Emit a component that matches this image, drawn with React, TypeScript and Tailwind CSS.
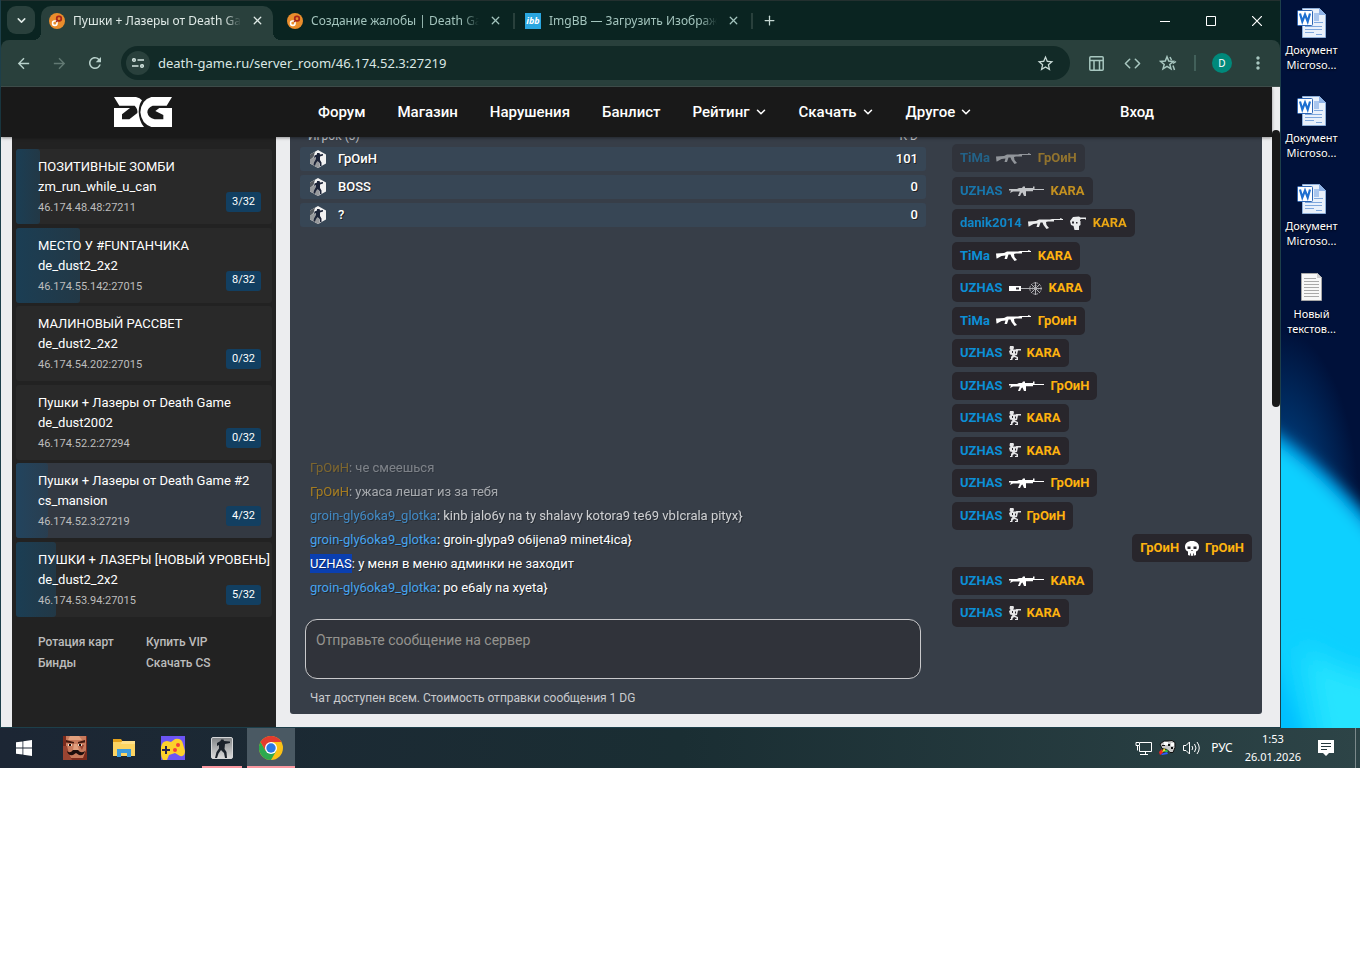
import type { ReactNode } from "react";
import { ChevronDown, Code, Plus, X } from "lucide-react";
import {
  MdArrowBack,
  MdArrowForward,
  MdMoreVert,
  MdRefresh,
  MdStarBorder,
} from "react-icons/md";

const servers = [
  { name: "ПОЗИТИВНЫЕ ЗОМБИ", map: "zm_run_while_u_can", ip: "46.174.48.48:27211", online: 3 },
  { name: "МЕСТО У #FUNТАНЧИКА", map: "de_dust2_2x2", ip: "46.174.55.142:27015", online: 8 },
  { name: "МАЛИНОВЫЙ РАССВЕТ", map: "de_dust2_2x2", ip: "46.174.54.202:27015", online: 0 },
  { name: "Пушки + Лазеры от Death Game", map: "de_dust2002", ip: "46.174.52.2:27294", online: 0 },
  { name: "Пушки + Лазеры от Death Game #2", map: "cs_mansion", ip: "46.174.52.3:27219", online: 4, active: true },
  { name: "ПУШКИ + ЛАЗЕРЫ [НОВЫЙ УРОВЕНЬ]", map: "de_dust2_2x2", ip: "46.174.53.94:27015", online: 5 },
];

const players = [
  { name: "ГрОиН", score: 101 },
  { name: "BOSS", score: 0 },
  { name: "?", score: 0 },
];

const messages = [
  { who: "ГрОиН", text: "че смеешься", color: "text-[#ffb000]", fade: "opacity-35" },
  { who: "ГрОиН", text: "ужаса лешат из за тебя", color: "text-[#ffb000]", fade: "opacity-55" },
  { who: "groin-gly6oka9_glotka", text: "kinb jalo6y na ty shalavy kotora9 te69 vbIcrala pityx}", color: "text-[#45a3ee]", fade: "opacity-75" },
  { who: "groin-gly6oka9_glotka", text: "groin-glypa9 o6ijena9 minet4ica}", color: "text-[#45a3ee]", fade: "" },
  { who: "UZHAS", text: "у меня в меню админки не заходит", color: "bg-[#0a3fb0] text-white py-[2px]", fade: "" },
  { who: "groin-gly6oka9_glotka", text: "po e6aly na xyeta}", color: "text-[#45a3ee]", fade: "" },
];

type Weapon = "ak" | "m4" | "blast" | "knife" | "skull";
const kills: { by: string; w: Weapon; to: string; head?: boolean; fade?: string; own?: boolean }[] = [
  { by: "TiMa", w: "ak", to: "ГрОиН", fade: "opacity-45" },
  { by: "UZHAS", w: "m4", to: "KARA", fade: "opacity-70" },
  { by: "danik2014", w: "ak", to: "KARA", head: true, fade: "opacity-90" },
  { by: "TiMa", w: "ak", to: "KARA" },
  { by: "UZHAS", w: "blast", to: "KARA" },
  { by: "TiMa", w: "ak", to: "ГрОиН" },
  { by: "UZHAS", w: "knife", to: "KARA" },
  { by: "UZHAS", w: "m4", to: "ГрОиН" },
  { by: "UZHAS", w: "knife", to: "KARA" },
  { by: "UZHAS", w: "knife", to: "KARA" },
  { by: "UZHAS", w: "m4", to: "ГрОиН" },
  { by: "UZHAS", w: "knife", to: "ГрОиН" },
  { by: "ГрОиН", w: "skull", to: "ГрОиН", own: true },
  { by: "UZHAS", w: "m4", to: "KARA" },
  { by: "UZHAS", w: "knife", to: "KARA" },
];

function WeaponIcon({ kind }: { kind: Weapon }) {
  if (kind === "ak")
    return (
      <svg width="36" height="13" viewBox="0 0 36 13" fill="#fff" aria-hidden="true">
        <path d="M0 4.500l8-.5 3-1.500h11l2-.5h8l.5-1h1v1H35v1h-9v1.500h-6l-2 .5.5 3 2.500 3-2.500 1-3-4-1-2.500h-2L11 10H8.500l1-3.500-4 .5L1 9.500H.5z" />
      </svg>
    );
  if (kind === "m4")
    return (
      <svg width="36" height="12" viewBox="0 0 36 12" fill="#fff" aria-hidden="true">
        <path d="M0 4h8l2-1h3l1-1.500h2V3h8V1.500h1.500V4H35v1H24v1.200h-7V11h-2l-1.500-3.500-1 .5L11 11H9l1.800-4.500H4L1 8l1-2.500H0z" />
      </svg>
    );
  if (kind === "blast")
    return (
      <svg width="34" height="15" viewBox="0 0 34 15" fill="none" stroke="#aeaeb2" aria-hidden="true">
        <path fill="#fff" stroke="none" d="M0 5h12v5H0z" />
        <path fill="#28262c" stroke="none" d="M7 6.500h3v2H7z" />
        <path d="M12 7.500h21M26.500 1v13M22 3l9 9M31 3l-9 9" />
        <circle cx="26.500" cy="7.500" r="5.700" strokeDasharray="2 1" />
        <circle cx="26.500" cy="7.500" r="3" strokeDasharray="1 1" />
      </svg>
    );
  if (kind === "knife")
    return (
      <svg width="12" height="15" viewBox="0 0 12 15" fill="#e6e6e8" aria-hidden="true">
        <path d="M1 0h3.500l.5 2-1 1.500h2.500l1-.5H12v1.500H9L8 9l-2.500.5L9 11v3H6v-1h1.500v-1.200L5 11l-1.500 1.500V14H1v-1h1v-2l1.500-2L1 8.500 0 5l1.500-1L.5 2.500z" />
        <path fill="#28262c" d="M3 5h1v2H3zM6 5.500h1v2H6z" />
      </svg>
    );
  return (
    <svg width="14" height="15" viewBox="0 0 14 15" aria-hidden="true">
      <path fill="#fff" d="M7 0c4.500 0 7 2.500 7 6 0 2.500-1.500 4-3 4.500V14c-1 1-7 1-8 0v-3.500C1.500 10 0 8.500 0 6c0-3.500 2.500-6 7-6z" />
      <path fill="#28262c" d="M2.500 5.500h3v2.500h-3zM8.500 5.500h3v2.500h-3zM6.600 9h.8l.4 1H6.200zM5 12.500h.8V15H5zM8.200 12.500H9V15h-.8z" />
    </svg>
  );
}

function HeadshotIcon() {
  return (
    <svg width="17" height="15" viewBox="0 0 17 15" aria-hidden="true">
      <path fill="#fff" d="M3 1l6-.5 1.500 1L16 1.500V3l-1 1V3h-4.500v6L9 10v4H4.500l-1-4L1 9 0 5z" />
      <path fill="#28262c" d="M2 5.500h2v2H2zM6 6h1.500v1.500H6zM10 4h1v1h-1z" />
    </svg>
  );
}

function GameFavicon() {
  return (
    <svg className="shrink-0" width="16" height="16" viewBox="0 0 16 16" aria-hidden="true">
      <circle cx="8" cy="8" r="8" fill="#ea8d2c" />
      <rect x="7.800" y="3.400" width="4.400" height="4.400" rx="1.800" fill="none" stroke="#a8261a" strokeWidth="1.800" />
      <rect x="3.600" y="8" width="4.400" height="4.400" rx="1.800" fill="none" stroke="#fff" strokeWidth="1.600" />
      <path d="M7 9l2-2" stroke="#a8261a" strokeWidth="1.400" />
    </svg>
  );
}

function Tab({ icon, title, active }: { icon: ReactNode; title: string; active?: boolean }) {
  return (
    <div
      className={
        active
          ? "relative flex w-58 min-w-0 items-center rounded-t-[10px] bg-[#29403c] px-2 pb-[5px] text-[#dfe9e6]"
          : "relative flex w-58 min-w-0 items-center px-2 pb-[5px] text-[#a3c4bd]"
      }
    >
      {active && (
        <>
          <span className="absolute bottom-0 -left-2 size-2 bg-[radial-gradient(circle_at_0_0,transparent_8px,#29403c_8px)]" />
          <span className="absolute -right-2 bottom-0 size-2 bg-[radial-gradient(circle_at_100%_0,transparent_8px,#29403c_8px)]" />
        </>
      )}
      {icon}
      <button type="button" className="ml-2 min-w-0 flex-1 overflow-hidden text-left text-[12px] leading-4 whitespace-nowrap [mask-image:linear-gradient(to_right,#000_90%,transparent)]">
        {title}
      </button>
      <button type="button" aria-label="Закрыть вкладку" className="ml-2 flex size-4 items-center justify-center">
        <X size={13} strokeWidth={2.4} />
      </button>
    </div>
  );
}

function TabDivider({ visible }: { visible?: boolean }) {
  return <span className={visible ? "mb-[5px] h-4 w-[2px] shrink-0 self-center bg-[#29403c]" : "w-[2px] shrink-0"} />;
}

function ChromeFrame() {
  return (
    <header className="font-['Noto_Sans','Open_Sans',sans-serif]">
      <div className="flex h-10 border-t border-[#23302f] bg-[#0a2421]">
        <button type="button" aria-label="Поиск вкладок" className="mt-[5px] ml-[6px] flex size-7 shrink-0 items-center justify-center rounded-[9px] bg-[#29403c] text-[#dfe9e6]">
          <ChevronDown size={13} strokeWidth={2.8} />
        </button>
        <div className="mt-[5px] ml-[6px] flex min-w-0 gap-[2px]">
          <Tab active icon={<GameFavicon />} title="Пушки + Лазеры от Death Game" />
          <TabDivider />
          <Tab icon={<GameFavicon />} title="Создание жалобы | Death Game" />
          <TabDivider visible />
          <Tab
            icon={
              <span className="flex size-4 shrink-0 items-center justify-center bg-[#2aa6e0] text-[9px] leading-4 font-bold text-white italic">ibb</span>
            }
            title="ImgBB — Загрузить Изображение"
          />
          <TabDivider visible />
        </div>
        <button type="button" aria-label="Новая вкладка" className="mt-[5px] ml-[2px] flex size-7 items-center justify-center self-start text-[#c5d8d3]">
          <Plus size={15} strokeWidth={2} />
        </button>
        <div className="ml-auto flex text-white">
          <button type="button" aria-label="Свернуть" className="flex w-[46px] items-center justify-center">
            <svg width="10" height="10"><path d="M0 5.500h10" stroke="#fff" /></svg>
          </button>
          <button type="button" aria-label="Развернуть" className="flex w-[46px] items-center justify-center">
            <svg width="10" height="10"><path d="M.5.5h9v9h-9z" stroke="#fff" fill="none" /></svg>
          </button>
          <button type="button" aria-label="Закрыть" className="flex w-[46px] items-center justify-center">
            <svg width="10" height="10"><path d="M0 0l10 10M10 0L0 10" stroke="#fff" strokeWidth="1.200" /></svg>
          </button>
        </div>
      </div>
      <div className="bg-[#0a2421]">
        <div className="flex h-[47px] items-center rounded-t-lg border-b border-[#42524f] bg-[#29403c] text-[#a8c7c0]">
          <button type="button" aria-label="Назад" className="ml-1 flex w-9 justify-center text-[#b9d2cc]"><MdArrowBack size={17} /></button>
          <button type="button" aria-label="Вперёд" className="flex w-9 justify-center text-[#627973]"><MdArrowForward size={17} /></button>
          <button type="button" aria-label="Обновить" className="flex w-9 justify-center text-[#b9d2cc]"><MdRefresh size={18} /></button>
          <div className="ml-2 flex h-[34px] flex-1 items-center rounded-full bg-[#122a27] pr-[15px] pl-[5px]">
            <button type="button" aria-label="Сведения о сайте" className="flex size-6 items-center justify-center rounded-full bg-[#29403c]">
              <svg width="12" height="12" viewBox="0 0 12 12" fill="none" stroke="#d5e5e1" strokeWidth="1.500">
                <circle cx="2" cy="3" r="1.300" /><path d="M5.500 3H12M0 9h6.500" /><circle cx="10" cy="9" r="1.300" />
              </svg>
            </button>
            <input aria-label="Адрес" readOnly value="death-game.ru/server_room/46.174.52.3:27219" className="ml-2 min-w-0 flex-1 bg-transparent text-[13px] leading-5 text-[#dbe7e4] outline-none" />
            <button type="button" aria-label="В закладки" className="text-[#c8d9d5]"><MdStarBorder size={19} /></button>
          </div>
          <div className="flex items-center pr-1 pl-2">
            <button type="button" aria-label="Панель" className="flex w-9 justify-center">
              <svg width="15" height="15" viewBox="0 0 15 15" fill="none" stroke="currentColor" strokeWidth="1.500">
                <rect x=".8" y=".8" width="13.400" height="13.400" rx="1" /><path d="M1 4.500h13M5 4.500V14M10.500 4.500V14" />
              </svg>
            </button>
            <button type="button" aria-label="Код" className="flex w-9 justify-center"><Code size={17} strokeWidth={2.2} /></button>
            <button type="button" aria-label="Избранное" className="flex w-9 justify-center">
              <svg width="18" height="17" viewBox="0 0 18 17" fill="none" stroke="currentColor" strokeWidth="1.500">
                <path d="M8 1.800l1.700 4.300 4.600.3-3.500 3 1.200 4.500L8 11.400l-4 2.500 1.200-4.500-3.500-3 4.600-.3zM14 8.500l3-2M14 10.500l1.500 4.500M11 2l1.500 3" />
              </svg>
            </button>
            <span className="mx-2 h-4 w-[2px] bg-[#42605a]" />
            <button type="button" aria-label="Профиль" className="mr-2 ml-2 flex size-5 items-center justify-center rounded-full bg-[#00897b] text-[10px] text-white">D</button>
            <button type="button" aria-label="Меню" className="flex w-9 justify-center"><MdMoreVert size={20} /></button>
          </div>
        </div>
      </div>
    </header>
  );
}

const navItems = [
  { label: "Форум" },
  { label: "Магазин" },
  { label: "Нарушения" },
  { label: "Банлист" },
  { label: "Рейтинг", more: true },
  { label: "Скачать", more: true },
  { label: "Другое", more: true },
];

function SiteNav() {
  return (
    <nav className="relative z-10 flex h-[50px] items-center bg-[#191919] pr-[118px] pl-[113px] text-[15px] leading-5 font-medium text-white shadow-[0_1px_3px_rgba(0,0,0,0.4)]">
      <a href="#home" aria-label="Death Game">
        <svg width="58" height="30" viewBox="0 0 174 90" fill="#fff" aria-hidden="true">
          <path d="M0 0H66Q78 3 84 10Q74 24 74 44Q75 72 90 90H0V33H48L24 52V67H46L70 48Q72 36 62 26H16Z" />
          <path d="M174 0L158 26H116Q100 32 100 46Q102 62 122 67H148V54L124 42L136 33H174V90H112Q82 80 79 46Q82 8 112 0Z" />
        </svg>
      </a>
      <div className="ml-[146px] flex gap-8">
        {navItems.map((n) => (
          <a key={n.label} href="#nav" className="flex items-center gap-1">
            {n.label}
            {n.more && <ChevronDown size={14} strokeWidth={2.6} className="-mr-px" />}
          </a>
        ))}
      </div>
      <a href="#login" className="ml-auto">Вход</a>
    </nav>
  );
}

function Sidebar() {
  return (
    <aside className="ml-[11px] w-[264px] shrink-0 bg-[#222222] px-1 pt-3">
      <ul className="flex h-[468px] flex-col justify-between">
        {servers.map((s) => (
          <li key={s.ip}>
            <a
              href="#server"
              className={
                s.active
                  ? "relative block h-[75px] overflow-hidden rounded-[3px] bg-[#333942] pt-2 pl-[22px]"
                  : "relative block h-[75px] overflow-hidden rounded-[3px] bg-[#292929] pt-2 pl-[22px]"
              }
            >
              <span
                className={
                  s.active
                    ? "absolute inset-y-0 left-0 rounded-r-[3px] bg-linear-to-r from-[#22445e] to-[#293e50]"
                    : "absolute inset-y-0 left-0 rounded-r-[3px] bg-linear-to-r from-[#1b3e54] to-[#223846]"
                }
                style={{ width: `${(s.online / 32) * 100}%` }}
              />
              <span className="relative block text-[13px] leading-5 whitespace-nowrap text-white">{s.name}</span>
              <span className="relative block text-[13px] leading-[19px] text-white">{s.map}</span>
              <span className="relative block text-[11px] leading-6 text-[#bdbdbd]">{s.ip}</span>
              <span className="absolute right-[11px] bottom-3 flex h-5 w-[35px] items-center justify-center rounded-[3px] bg-[#123f61] text-[11px] text-white">
                {s.online}/32
              </span>
            </a>
          </li>
        ))}
      </ul>
      <div className="grid grid-cols-[108px_1fr] pt-[15px] pl-[22px] text-[12px] leading-[21px] font-medium text-[#bcbcbc]">
        <a href="#rotation">Ротация карт</a>
        <a href="#vip">Купить VIP</a>
        <a href="#binds">Бинды</a>
        <a href="#cs">Скачать CS</a>
      </div>
    </aside>
  );
}

function PlayerIcon() {
  return (
    <svg width="18" height="20" viewBox="0 0 18 20" aria-hidden="true">
      <path fill="#f2f2f2" d="M9 1l8 4.500v9L9 19l-8-4.500v-9z" />
      <path fill="#55595f" d="M1 11V5.500L6 2.700 4.500 8z" />
      <path fill="#97999c" d="M1 14.500V11l4-3 4 3 2 7L9 19z" />
      <path fill="#1d2438" d="M8 4h2.500l.5 1.500 3-.5v1.500l-3 1V11l1.500 2.500V17H11l-.5-3-2-2L7 14l-1 2.500H4.500l.5-3L7 10l-.5-2L5 9l.5-2.500L8 5.500z" />
    </svg>
  );
}

function ServerRoom() {
  return (
    <main className="mr-[10px] mb-[13px] ml-[14px] flex min-w-0 flex-1 gap-[26px] overflow-hidden rounded-b-[3px] bg-[#373e48] pl-[10px]">
      <section className="min-w-0 flex-1">
        <table className="-mt-[22px] w-full border-separate border-spacing-x-0 border-spacing-y-1 text-[13px] text-white">
          <thead>
            <tr className="h-6 text-[12px] leading-[14px] text-[#c3c6ca]">
              <th className="py-0 pl-2 text-left align-bottom font-normal">Игрок (3)</th>
              <th className="py-0 pr-2 text-right align-bottom font-normal">K D</th>
            </tr>
          </thead>
          <tbody>
            {players.map((p) => (
              <tr key={p.name} className="h-6 bg-[#374655] font-medium [text-shadow:1px_1px_0_#222]">
                <td className="rounded-l-[3px] py-0 pl-[9px]">
                  <span className="flex items-center gap-[11px]"><PlayerIcon />{p.name}</span>
                </td>
                <td className="rounded-r-[3px] py-0 pr-2 text-right">{p.score}</td>
              </tr>
            ))}
          </tbody>
        </table>
        <div className="flex h-[369px] flex-col justify-end pl-[10px] text-[13px] leading-6 text-white [text-shadow:1px_1px_0_rgba(0,0,0,0.4)]">
          {messages.map((m) => (
            <p key={m.who + m.text} className={m.fade}>
              <span className={m.color}>{m.who}</span>: {m.text}
            </p>
          ))}
        </div>
        <textarea aria-label="Сообщение" placeholder="Отправьте сообщение на сервер" className="mt-[19px] ml-[5px] block h-[60px] w-[calc(100%-10px)] resize-none rounded-xl border border-[#c9c9cb] bg-[#30333a] px-[10px] py-[10px] text-[14px] leading-5 text-white outline-none placeholder:text-[#95938f]" />
        <p className="mt-[9px] mb-[6px] pl-[10px] text-[12px] leading-5 text-[#c9cbce]">Чат доступен всем. Стоимость отправки сообщения 1 DG</p>
      </section>
      <ul className="mt-[7px] flex h-[483px] w-[310px] shrink-0 flex-col justify-between pr-[10px] text-[13px] font-bold">
        {kills.map((k, i) => (
          <li key={i} className={k.own ? "flex justify-end" : "flex"}>
            <span className={"flex h-7 items-center gap-[6px] rounded-[5px] bg-[#28262c] px-2 " + (k.fade ?? "")}>
              <span className={k.own ? "text-[#ffb30f]" : "text-[#0c8fd6]"}>{k.by}</span>
              <WeaponIcon kind={k.w} />
              {k.head && <HeadshotIcon />}
              <span className="text-[#ffb30f]">{k.to}</span>
            </span>
          </li>
        ))}
      </ul>
    </main>
  );
}

function WordFile() {
  return (
    <svg width="32" height="32" viewBox="0 0 32 32" aria-hidden="true">
      <path fill="#e9f1fb" stroke="#8fb0da" d="M6.500 1.500h17l6 6v23h-23z" />
      <path fill="#8fb3e6" d="M23 1v7h7z" />
      <path fill="#a9c6ee" d="M18 6h5v8h-5z" />
      <path stroke="#7fa8dd" d="M18 15.500h9M9 19.500h17M9 22.500h17M9 25.500h9M20 27.500h6" />
      <rect x="1.500" y="3.500" width="15" height="15" rx="1" fill="#fff" stroke="#2d66b5" />
      <path fill="none" stroke="#1d6fd0" strokeWidth="2.200" d="M4 6.500l2.300 8L9 7.500l2.700 7L14 6.500" />
    </svg>
  );
}

function TextFile() {
  return (
    <svg width="32" height="32" viewBox="0 0 32 32" aria-hidden="true">
      <path fill="#f8f8f8" stroke="#a8a8a8" d="M5.500 2.500h16l4 4v23h-20z" />
      <path fill="#d0d0d0" d="M21 2v5h5z" />
      <path stroke="#a9a9a9" d="M8 7.500h12M8 10.500h15M8 13.500h15M8 16.500h15M8 19.500h15M8 22.500h15M8 25.500h15" />
    </svg>
  );
}

const files = [
  { top: "Документ", bottom: "Microso...", word: true },
  { top: "Документ", bottom: "Microso...", word: true },
  { top: "Документ", bottom: "Microso...", word: true },
  { top: "Новый", bottom: "текстов...", word: false },
];

function Desktop() {
  return (
    <aside className="relative w-[79px] shrink-0 overflow-hidden bg-[#00113a]">
      <svg className="absolute inset-0 size-full" viewBox="0 0 79 728" preserveAspectRatio="none" aria-hidden="true">
        <defs>
          <radialGradient id="glow" cx="0" cy="1" r="1">
            <stop offset="0" stopColor="#00539a" />
            <stop offset="1" stopColor="#00113a" />
          </radialGradient>
          <filter id="soft" filterUnits="userSpaceOnUse" x="-100" y="300" width="300" height="550"><feGaussianBlur stdDeviation="7" /></filter>
          <filter id="softer" filterUnits="userSpaceOnUse" x="-100" y="500" width="300" height="350"><feGaussianBlur stdDeviation="12" /></filter>
        </defs>
        <rect y="330" width="79" height="190" fill="url(#glow)" />
        <path filter="url(#soft)" fill="#008fd8" d="M-60 400Q40 445 130 570V800H-60z" />
        <path filter="url(#soft)" fill="#0fd0ff" d="M-60 414Q40 455 130 590V900H-60z" />
        <path filter="url(#softer)" fill="#28e4ff" d="M20 640Q40 670 110 680V800H50z" />
        <path filter="url(#soft)" fill="#00c0ff" d="M-30 620Q10 680 36 790H-30z" />
      </svg>
      <ul className="relative flex w-[61px] flex-col gap-[15px] pt-[7px] font-['Noto_Sans','Open_Sans',sans-serif]">
        {files.map((f, i) => (
          <li key={i} className="flex h-[73px] flex-col items-center text-center text-[11px] leading-[15px] text-white [text-shadow:0_1px_2px_#000]">
            {f.word ? <WordFile /> : <TextFile />}
            <span className="mt-[3px]">{f.top}</span>
            <span>{f.bottom}</span>
          </li>
        ))}
      </ul>
    </aside>
  );
}

function TaskButton({ label, children, state }: { label: string; children: ReactNode; state?: "open" | "active" }) {
  return (
    <button
      type="button"
      aria-label={label}
      className={state === "active" ? "relative flex w-12 items-center justify-center bg-[#4a5963]" : "relative flex w-12 items-center justify-center"}
    >
      {children}
      {state && <span className={state === "active" ? "absolute inset-x-0 bottom-0 h-[2px] bg-[#fb98a0]" : "absolute inset-x-1 bottom-0 h-[2px] bg-[#fb98a0]"} />}
    </button>
  );
}

function Taskbar() {
  return (
    <footer className="flex h-10 items-stretch bg-linear-to-r from-[#1c2634] via-[#1a2e33] to-[#2d4447] font-['Noto_Sans','Open_Sans',sans-serif] text-white">
      <TaskButton label="Пуск">
        <svg width="16" height="16" viewBox="0 0 16 16" fill="#fff"><path d="M0 2.300l6.500-.9v6.100H0zM7.300 1.300L16 0v7.500H7.300zM0 8.400h6.500v6.200L0 13.700zM7.300 8.400H16V16l-8.700-1.200z" /></svg>
      </TaskButton>
      <div className="ml-[3px] flex gap-px">
        <TaskButton label="Hello Neighbor">
          <svg width="24" height="24" viewBox="0 0 24 24">
            <path fill="#7b2a1c" d="M0 0h24v24H0z" />
            <path fill="#c87a5c" d="M3 0h20v14l-3 8H8l-5-7z" />
            <path fill="#e2a07e" d="M7 0h9l3 4H5zM11 8l3 0 2 6h-6z" />
            <path fill="#9a4431" d="M0 10l4 0 2 8 3 6H0zM16 9h5l-2 5z" />
            <path fill="#43180f" d="M3 4l8 2v1.500L3 6.500zM22 4l-7 2v1.500l7-1z" />
            <path fill="#e8d9c8" d="M5 8h4v2H5zM15 8h4v2h-4z" />
            <path fill="#1d0d0c" d="M6 8h2v2H6zM16 8h2v2h-2zM4 15q3 3 6-1h5q3 4 7 1-1 5-6 4l-3-2-3 2q-5 1-6-4z" />
          </svg>
        </TaskButton>
        <TaskButton label="Проводник">
          <svg width="22" height="20" viewBox="0 0 22 20">
            <path fill="#e4a11b" d="M0 1h8l2 3H0z" /><path fill="#fcd462" d="M0 4h22v14H0z" />
            <path fill="#ffe08a" d="M9 3h13v3H8z" /><path fill="#3c9bdc" d="M4 11h14v8h-4v-4H8v4H4z" />
          </svg>
        </TaskButton>
        <TaskButton label="Игры">
          <svg width="24" height="24" viewBox="0 0 24 24">
            <path fill="#6c55f5" d="M0 0h24v24H0z" />
            <path fill="#fcd12b" d="M0 11q1-6 6-6l4 1 4-3q7-1 8 5l2 7q0 6-5 5l-5-3-6 2-2 5H2q-2-3-2-6z" />
            <path fill="#26244a" d="M4 10h2v3h3v2H6v3H4v-3H1v-2h3z" />
            <circle cx="17" cy="9" r="2" fill="#f2413a" /><circle cx="14" cy="14" r="2" fill="#f2413a" />
          </svg>
        </TaskButton>
        <TaskButton label="Counter-Strike" state="open">
          <svg width="22" height="22" viewBox="0 0 22 22">
            <defs><linearGradient id="cs" x1="0" y1="0" x2="0" y2="1"><stop offset="0" stopColor="#808386" /><stop offset="1" stopColor="#dcdcdc" /></linearGradient></defs>
            <rect x=".5" y=".5" width="21" height="21" rx="1.500" fill="url(#cs)" stroke="#d5d6d8" />
            <path fill="#1b222b" d="M10 2.500h2.500L13 4l6 .5V6l-5 1-.5 5 2 3 .5 6h-2l-1-5-3-3-2.500 3.500L6 21H4l1.500-6L8 11.500V8L6 9V6l3.500-2z" />
          </svg>
        </TaskButton>
        <TaskButton label="Google Chrome" state="active">
          <svg width="24" height="24" viewBox="0 0 24 24">
            <circle cx="12" cy="12" r="12" fill="#fbc116" />
            <path fill="#2da94f" d="M1.600 6A12 12 0 0 0 12 24l5.200-9L12 12 6.800 15z" />
            <path fill="#e33b2e" d="M1.600 6A12 12 0 0 1 22.400 6H12v6l-5.200 3z" />
            <circle cx="12" cy="12" r="6" fill="#fff" /><circle cx="12" cy="12" r="4.700" fill="#2a78e4" />
          </svg>
        </TaskButton>
      </div>
      <div className="ml-auto flex items-center">
        <svg width="17" height="15" viewBox="0 0 17 15" fill="none" stroke="#fff" aria-hidden="true">
          <path d="M5 1.500h11.500v9H4.500V5M10.500 10.500v3M5 13.500h8M1 1.500h3.500v3H1zM2.500 4.500v5" />
        </svg>
        <svg className="ml-[7px]" width="17" height="16" viewBox="0 0 17 16" aria-hidden="true">
          <path fill="#c9c9c9" stroke="#111" d="M1 4l4-3h4l4-.5 3 2v5l-2 5h-3l-3-3-5-1z" />
          <path fill="#fff" d="M5 2h4v3H5zM12 3h3v3h-3z" />
          <path fill="#111" d="M9 4h2v2H9zM12 7h2v2h-2zM3 5h3v1H3z" />
          <path fill="#e22" d="M0 12l3-3 1 4-3 2z" /><path fill="#eedc20" d="M3 12l2-4 2 3z" /><path fill="#2db84a" d="M5 12l3-3 1 3z" /><path fill="#2e5cff" d="M2 14l6-2 1 2-6 1z" />
        </svg>
        <svg className="ml-[7px]" width="18" height="14" viewBox="0 0 18 14" fill="none" stroke="#fff" aria-hidden="true">
          <path d="M.5 4.500H3L6.500 1v12L3 9.500H.5zM9 5q1.500 2 0 4M11.500 3q3 4 0 8M14 1q4.500 6 0 12" />
        </svg>
        <span className="ml-[10px] text-[12px]">РУС</span>
        <span className="ml-3 flex flex-col items-center text-[11px] leading-[18px]">
          <span>1:53</span>
          <span>26.01.2026</span>
        </span>
        <button type="button" aria-label="Уведомления" className="mr-5 ml-4">
          <svg width="18" height="18" viewBox="0 0 18 18"><path fill="#fff" d="M1 1h16v13h-5l-3 3-3-3H1z" /><path stroke="#26383d" d="M4 4.500h10M4 7.500h10M4 10.500h6" /></svg>
        </button>
        <span className="mr-1 h-10 w-px bg-[#7b898b]" />
      </div>
    </footer>
  );
}

export default function App() {
  return (
    <div className="min-h-screen bg-white font-['Roboto','Liberation_Sans',sans-serif]">
      <div className="flex">
        <div className="min-w-0 flex-1 border-r border-b border-l border-[#1d3f4a]">
          <ChromeFrame />
          <div className="flex bg-[#ecedef]">
            <div className="min-w-0 flex-1">
              <SiteNav />
              <div className="flex">
                <Sidebar />
                <ServerRoom />
              </div>
            </div>
            <div className="w-2 shrink-0 pt-[43px]">
              <div className="h-[277px] rounded-full bg-[#191919]" />
            </div>
          </div>
        </div>
        <Desktop />
      </div>
      <Taskbar />
    </div>
  );
}
